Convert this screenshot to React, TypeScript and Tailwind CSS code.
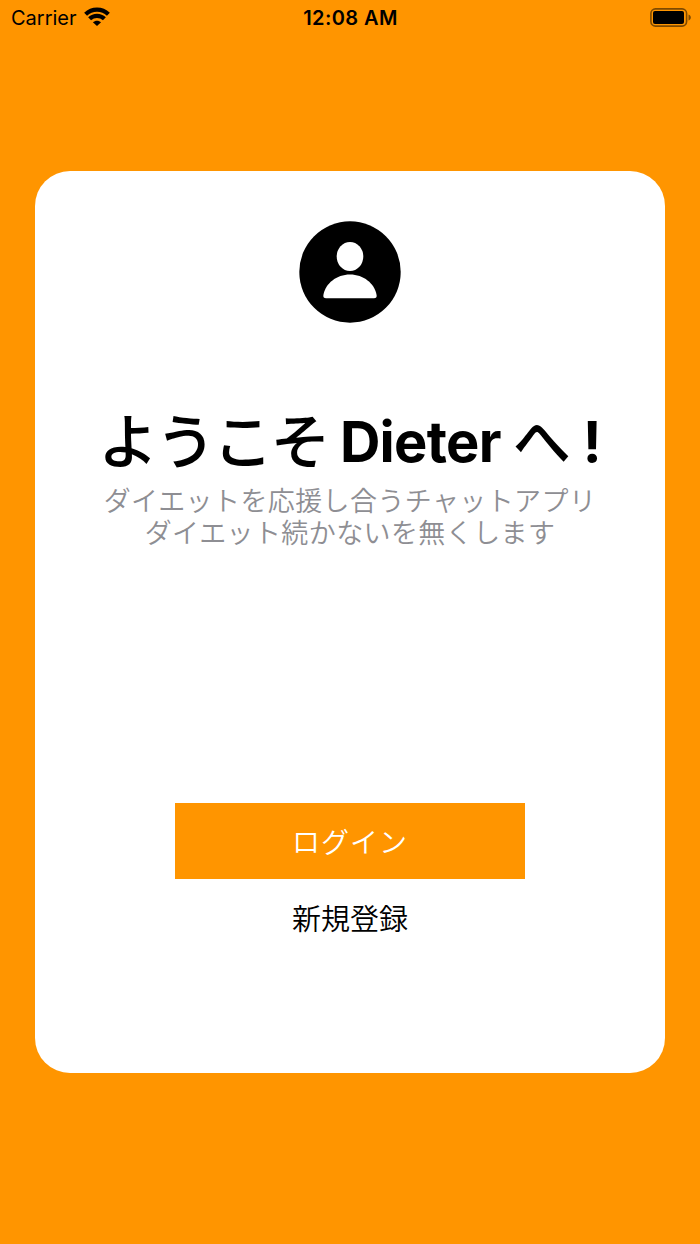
function StatusBar() {
  return (
    <header className="flex h-[35px] w-full items-center justify-between pl-[11px] pr-[9px] font-['Inter',sans-serif] text-[20px]">
      <div className="flex flex-1 items-center gap-[7px]">
        <span>Carrier</span>
        <svg width="26" height="19" viewBox="0 0 26 19" fill="none" stroke="currentColor" strokeWidth="4.2" className="-mt-0.5" aria-hidden>
          <path d="M1.600 7.200C8 1 18 1 24.400 7.200" />
          <path d="M5.600 11.800c4.200-4 10.600-4 14.800 0" />
          <path d="M8.900 15.300c2.300-2.200 5.900-2.200 8.200 0L13 19z" fill="currentColor" stroke="none" />
        </svg>
      </div>
      <span className="mr-px font-semibold tracking-[0.4px]">12:08 AM</span>
      <div className="flex flex-1 justify-end">
        <svg width="41" height="19" viewBox="0 0 41 19" className="-mt-px" aria-hidden>
          <rect x="0.9" y="0.9" width="35.700" height="17.200" rx="4.500" fill="none" stroke="#000" strokeOpacity=".5" strokeWidth="1.600" />
          <rect x="3" y="3" width="31" height="13" rx="2" />
          <path d="M38.500 6.500c1.600.6 2.300 1.600 2.300 3s-.7 2.400-2.300 3z" fillOpacity=".5" />
        </svg>
      </div>
    </header>
  );
}

function PersonIcon() {
  return (
    <svg width="102" height="102" viewBox="0 0 102 102" aria-hidden>
      <circle cx="51" cy="51" r="50.700" />
      <ellipse cx="51" cy="35.500" rx="13.300" ry="14.500" fill="#fff" />
      <path d="M27 77.300q-3.100 0-2.600-3.300C26.500 62.500 37.500 53.600 51 53.600S75.500 62.500 77.600 74q.5 3.300-2.600 3.300z" fill="#fff" />
    </svg>
  );
}

export default function App() {
  return (
    <div className="flex h-[1244px] w-[700px] flex-col items-center overflow-hidden bg-[#ff9500] text-black">
      <StatusBar />
      <main className="mt-[136px] flex h-[902px] w-[630px] flex-col items-center rounded-[35px] bg-white pt-[50px] font-['Noto_Sans_CJK_JP',sans-serif]">
        <PersonIcon />
        <h1 className="mt-[78px] flex h-20 items-center whitespace-nowrap text-[56px] leading-[80px]">
          <span className="pb-[7px] text-[60px] font-medium tracking-[-2.600px]">ようこそ</span>
          <span className="ml-[12px] pt-px font-['Inter',sans-serif] font-bold tracking-[-0.7px]">Dieter</span>
          <span className="ml-[12px] pb-[6px] text-[58px] font-medium">へ</span>
          <span className="ml-[12px] pt-px font-['Inter',sans-serif] font-bold">!</span>
        </h1>
        <p className="mt-[3px] text-center text-[27px] font-[350] leading-[32px] tracking-[0.400px] text-[#8e8e93]">
          ダイエットを応援し合うチャットアプリ
          <br />
          ダイエット続かないを無くします
        </p>
        <button type="button" className="mt-[255px] h-[76px] w-[350px] bg-[#ff9500] pb-px text-[28px] font-[350] tracking-[1px] text-white">
          ログイン
        </button>
        <button type="button" className="mt-4 h-[44px] text-[29px] font-[350] leading-[44px]">
          新規登録
        </button>
      </main>
    </div>
  );
}
